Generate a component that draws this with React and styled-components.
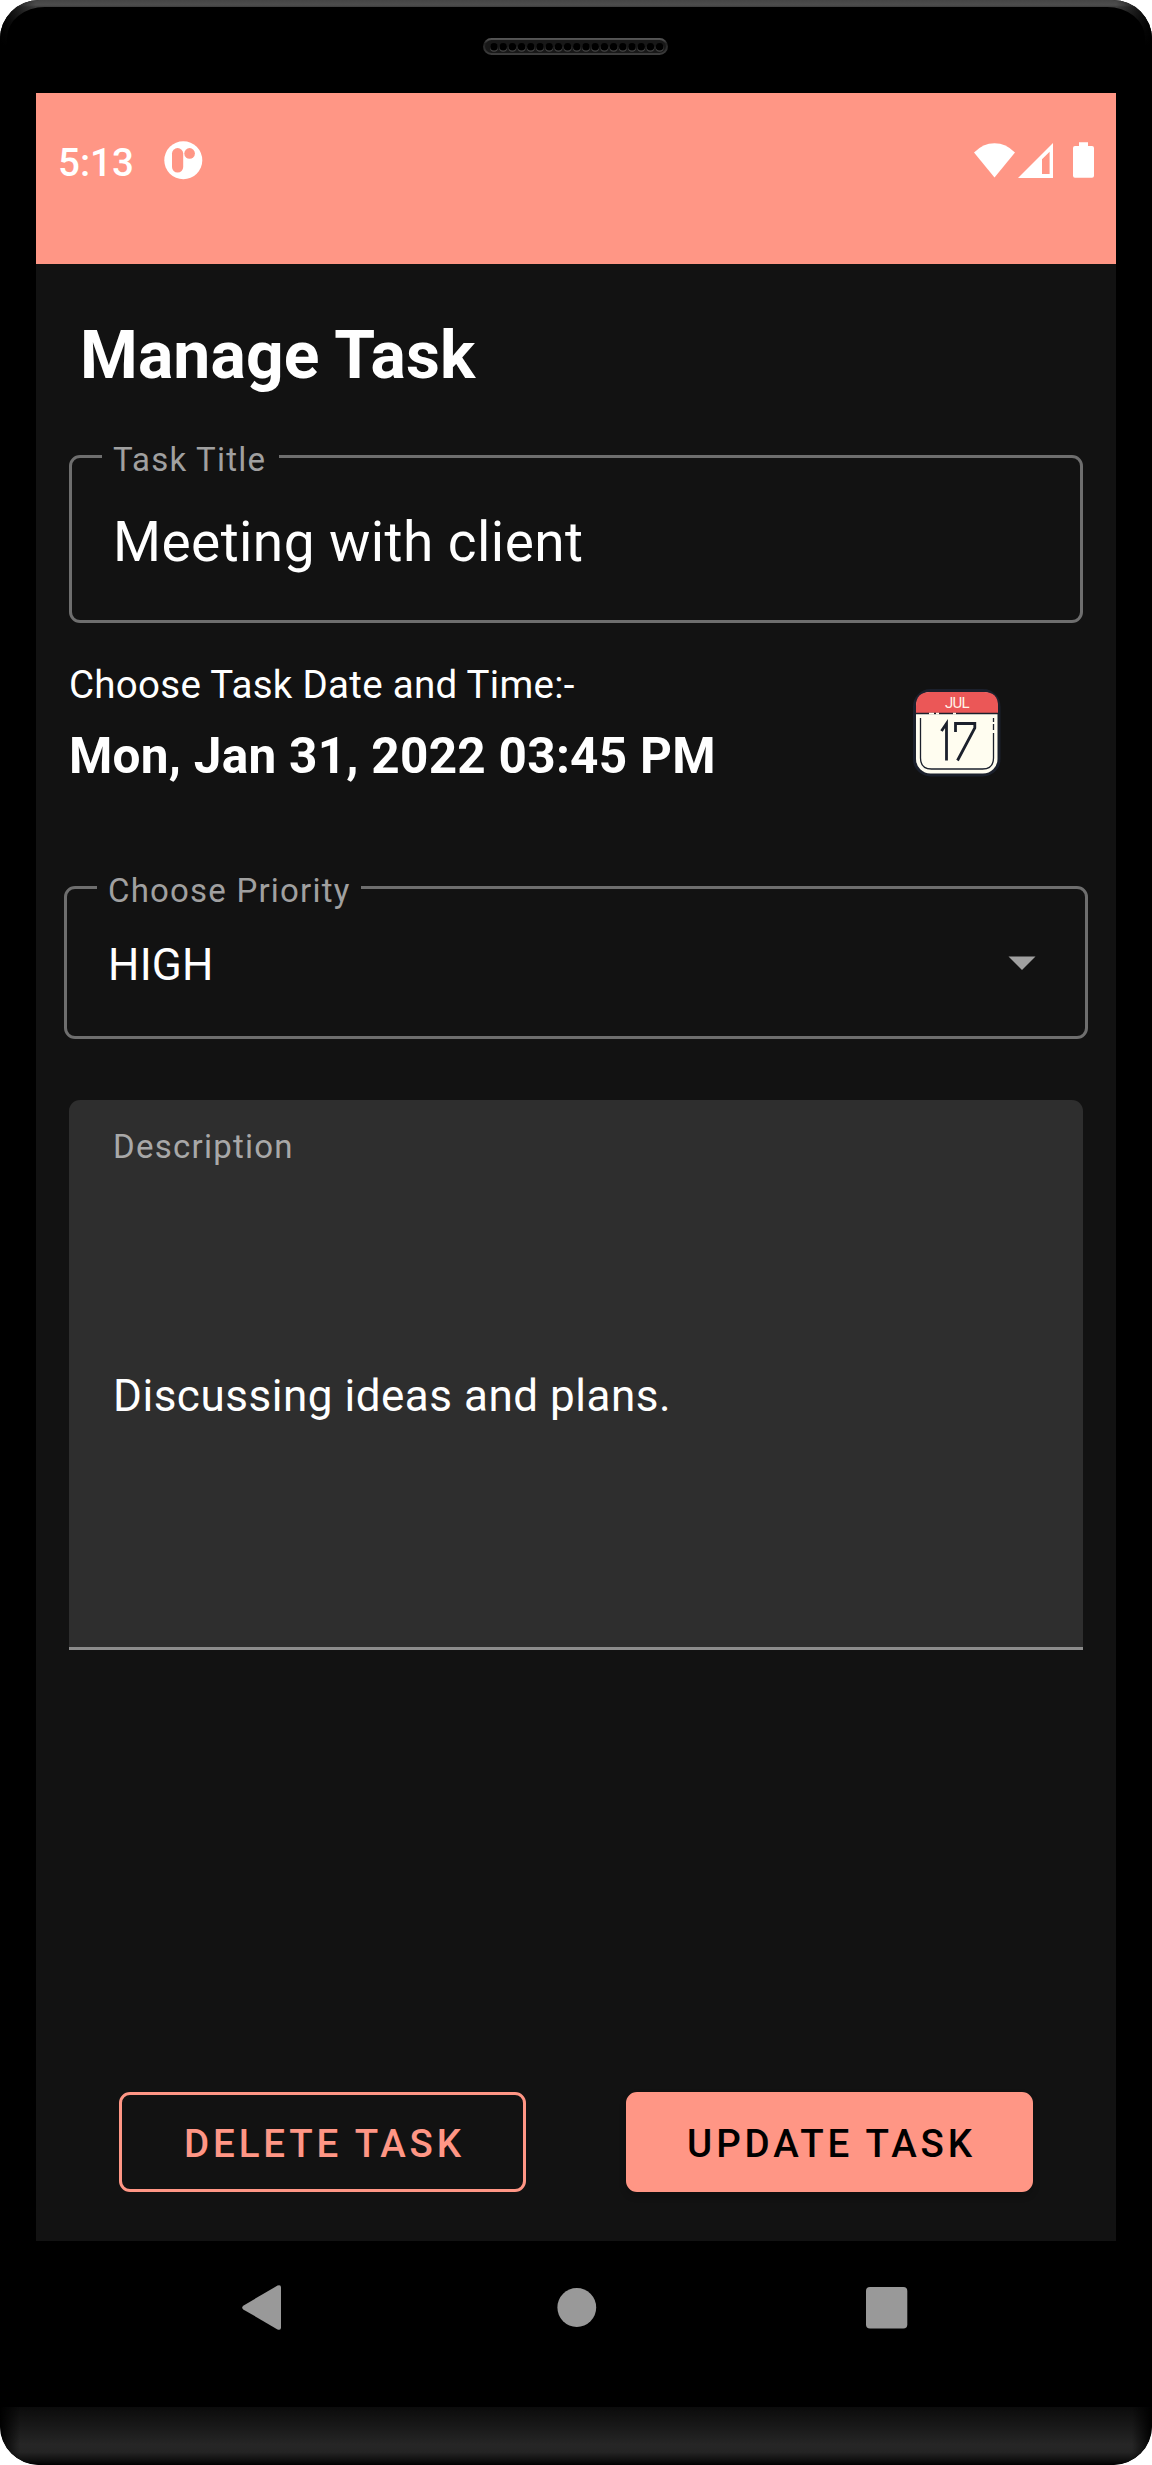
import React from "react";
import styled, { createGlobalStyle } from "styled-components";

const coral = "#ff9685";
const surface = "#121212";

const GlobalStyle = createGlobalStyle`
  *, *::before, *::after { box-sizing: border-box; }
  body { margin: 0; background: #fff; font-family: Roboto, "Liberation Sans", sans-serif; }
`;

const Phone = styled.div`
  width: 1152px;
  height: 2465px;
  display: flex;
  flex-direction: column;
  background: #000;
  border-radius: 39px;
  overflow: hidden;
`;

const TopBezel = styled.div`
  height: 93px;
  flex: none;
  background: linear-gradient(#454545, #4d4d4d 5px, #3c3c3c 7px, #000 46px);
`;

const TopBezelInner = styled.div`
  height: 93px;
  border-top: 7px solid transparent;
  border-radius: 38px 38px 0 0;
  background: #000 padding-box;
  display: flex;
  justify-content: center;
  padding: 31px 1px 0 0;
  margin: 0 7px;
`;

const BezelFrame = styled.div`
  height: 93px;
  background: linear-gradient(90deg, #000, transparent 36px, transparent 1116px, #000);
`;

const Screen = styled.main`
  height: 2148px;
  flex: none;
  margin: 0 36px;
  display: flex;
  flex-direction: column;
  background: ${surface};
  color: #fff;
`;

const StatusBar = styled.header`
  height: 171px;
  flex: none;
  display: flex;
  align-items: flex-start;
  padding: 43px 22px 0 22px;
  background: ${coral};
`;

const Clock = styled.span`
  width: 99px;
  font-size: 38.5px;
  font-weight: 500;
  line-height: 54px;
  white-space: nowrap;
`;

const AppBadge = styled.svg`
  width: 48px;
  height: 44px;
  margin-top: 2px;
`;

const StatusIcons = styled.svg`
  width: 132px;
  height: 44px;
  margin: 2px 0 0 auto;
`;

const Title = styled.h1`
  margin: 52px 0 59px 44px;
  font-size: 66px;
  line-height: 80px;
  font-weight: 700;
  letter-spacing: 0.12px;
`;

const Outlined = styled.div`
  position: relative;
  flex: none;
  height: ${(p) => p.$height}px;
  margin: 0 ${(p) => p.$inset}px;
  padding: ${(p) => p.$top}px 41px 0;
  border: 3px solid #6e6e6e;
  border-radius: 11px;
  display: flex;
  justify-content: space-between;
  align-items: flex-start;
`;

const FloatingLabel = styled.label`
  position: absolute;
  top: -18px;
  left: 30px;
  width: ${(p) => p.$width}px;
  padding-left: 11px;
  background: ${surface};
  color: #a0a0a0;
  font-size: 33px;
  line-height: 40px;
  letter-spacing: 1.2px;
  white-space: nowrap;
`;

const Value = styled.span`
  font-size: ${(p) => p.$size}px;
  line-height: ${(p) => p.$line}px;
  letter-spacing: ${(p) => p.$tracking}px;
  white-space: nowrap;
`;

const DropdownArrow = styled.svg`
  width: 28px;
  height: 14px;
  margin: 17px 8px 0 0;
`;

const DateRow = styled.section`
  display: flex;
  justify-content: space-between;
  align-items: flex-start;
  height: 124px;
  flex: none;
  margin: 39px 115px 100px 33px;
`;

const DateText = styled.div`
  display: flex;
  flex-direction: column;
  gap: 18px;
  white-space: nowrap;
`;

const DatePrompt = styled.span`
  font-size: 38.5px;
  line-height: 46px;
  letter-spacing: 0.29px;
`;

const DateValue = styled.strong`
  font-size: 49.5px;
  line-height: 60px;
  font-weight: 700;
  letter-spacing: 0.26px;
`;

const Calendar = styled.svg`
  width: 88px;
  height: 88px;
  margin-top: 27px;
`;

const Description = styled.div`
  flex: none;
  height: 550px;
  margin: 61px 33px 0;
  padding: 27px 44px 0;
  border-radius: 11px 11px 0 0;
  border-bottom: 3px solid #8c8c8c;
  background: #2e2e2e;
  display: flex;
  flex-direction: column;
  gap: 203px;
`;

const DescriptionLabel = styled.label`
  color: #a8a8a8;
  font-size: 33px;
  line-height: 40px;
  letter-spacing: 1.25px;
`;

const Actions = styled.footer`
  display: flex;
  justify-content: space-between;
  margin: auto 83px 49px;
`;

const Button = styled.button`
  width: 407px;
  height: 100px;
  padding: 4px 0 0 4px;
  border: 3px solid ${coral};
  border-radius: 11px;
  background: ${(p) => (p.$filled ? coral : "transparent")};
  color: ${(p) => (p.$filled ? "#000" : coral)};
  box-shadow: ${(p) => (p.$filled ? "0 4px 7px rgba(0, 0, 0, 0.2)" : "none")};
  font-family: inherit;
  font-size: 38.5px;
  font-weight: 500;
  line-height: 46px;
  letter-spacing: 3.85px;
`;

const NavBar = styled.nav`
  height: 166px;
  flex: none;
  display: flex;
  justify-content: space-between;
  align-items: flex-start;
  padding: 44px 243px 0 240px;
`;

const NavIcon = styled.svg`
  width: 44px;
  height: 46px;
  fill: #999;
`;

const BottomBezel = styled.div`
  height: 58px;
  flex: none;
  border-radius: 0 0 39px 39px;
  background:
    linear-gradient(90deg, #000, transparent 20px, transparent 1132px, #000),
    linear-gradient(#0b0b0b, #171717 30%, #262626 65%, #242424 78%, #0c0c0c 94%, #000 100%);
`;

function Speaker() {
  const holes = Array.from({ length: 19 }, (_, i) => 11 + i * 9.2);
  return (
    <svg width="185" height="17" viewBox="0 0 185 17">
      <defs>
        <linearGradient id="grille" x1="0" y1="0" x2="0" y2="1">
          <stop offset="0" stopColor="#555" />
          <stop offset="0.3" stopColor="#222" />
          <stop offset="1" stopColor="#3c3c3c" />
        </linearGradient>
      </defs>
      <rect x="1" y="1" width="183" height="15" rx="7.5" fill="#181818" stroke="url(#grille)" strokeWidth="2" />
      {holes.map((x) => (
        <g key={x}>
          <circle cx={x} cy="9.8" r="4" fill="#454545" />
          <circle cx={x} cy="8.8" r="3.8" fill="#000" />
        </g>
      ))}
    </svg>
  );
}

export default function App() {
  return (
    <>
      <GlobalStyle />
      <Phone>
        <TopBezel>
          <BezelFrame>
            <TopBezelInner>
              <Speaker />
            </TopBezelInner>
          </BezelFrame>
        </TopBezel>

        <Screen>
          <StatusBar>
            <Clock>5:13</Clock>
            <AppBadge viewBox="157 138 48 44">
              <circle cx="183.3" cy="160.3" r="19" fill="#fff" />
              <rect x="172" y="148" width="11.2" height="24.6" rx="5.6" fill={coral} />
              <circle cx="189.6" cy="153.4" r="5.3" fill={coral} />
            </AppBadge>
            <StatusIcons viewBox="962 138 132 44" fill="#fff">
              <path d="M974 152.5 Q983 143.2 994.5 143.2 Q1006 143.2 1015 152.5 L994.5 177.5 Z" />
              <path fillRule="evenodd" d="M1018 178 L1053 143 V178 Z M1042 159.3 V174 H1049.6 V151.7 Z" />
              <path d="M1079 142.3 H1088 V146 H1092 Q1094 146 1094 148 V175.8 Q1094 177.8 1092 177.8 H1075 Q1073 177.8 1073 175.8 V148 Q1073 146 1075 146 H1079 Z" />
            </StatusIcons>
          </StatusBar>

          <Title>Manage Task</Title>

          <Outlined $height={168} $inset={33} $top={52}>
            <FloatingLabel $width={177}>Task Title</FloatingLabel>
            <Value $size={55} $line={64} $tracking={0.43}>Meeting with client</Value>
          </Outlined>

          <DateRow>
            <DateText>
              <DatePrompt>Choose Task Date and Time:-</DatePrompt>
              <DateValue>Mon, Jan 31, 2022 03:45 PM</DateValue>
            </DateText>
            <Calendar viewBox="913 689 88 88">
              <rect x="914.5" y="690.5" width="84.5" height="84.5" rx="16" fill="#fffdf0" stroke="#1b202c" strokeWidth="3" />
              <path d="M916 713 V706 Q916 692 930 692 H984 Q998 692 998 706 V713 Z" fill="#eb5757" />
              <path d="M916 713.5 H998" stroke="#1b202c" strokeWidth="1.5" />
              <path d="M929 713.7 H934 M936 713.7 H939 M953 713.7 H956" stroke="#fffdf0" strokeWidth="1.8" />
              <text x="945" y="708" fontFamily="Roboto" fontSize="15" fontWeight="400" textLength="24.5" fill="#fff3e8">JUL</text>
              <path d="M920.5 718 V758 Q920.5 769 931.5 769 H982.5 Q993.5 769 993.5 758 V733 M993.5 718 V722 M993.5 724 V730" fill="none" stroke="#1b202c" strokeWidth="1.3" />
              <path d="M941.5 731 L946.5 723.5 V760.5 M955.5 732 V723.5 H974.8 V728 L957.5 760.5" fill="none" stroke="#1b202c" strokeWidth="2.8" />
            </Calendar>
          </DateRow>

          <Outlined $height={153} $inset={28} $top={50}>
            <FloatingLabel $width={264}>Choose Priority</FloatingLabel>
            <Value $size={44} $line={52} $tracking={0.25}>HIGH</Value>
            <DropdownArrow viewBox="0 0 28 14">
              <path d="M0.5 0.5 H27.5 L14 14 Z" fill="#a0a0a0" />
            </DropdownArrow>
          </Outlined>

          <Description>
            <DescriptionLabel>Description</DescriptionLabel>
            <Value $size={44} $line={52} $tracking={0.53}>Discussing ideas and plans.</Value>
          </Description>

          <Actions>
            <Button>DELETE TASK</Button>
            <Button $filled>UPDATE TASK</Button>
          </Actions>
        </Screen>

        <NavBar>
          <NavIcon viewBox="240 2285 44 46">
            <path d="M243.2 2305.7 L277.5 2285.6 Q281 2284.3 281 2287.5 V2327.5 Q281 2330.8 277.5 2329.4 L243.2 2309.4 Q241.2 2307.5 243.2 2305.7 Z" />
          </NavIcon>
          <NavIcon viewBox="552.7 2285 44 46">
            <circle cx="576.5" cy="2307.5" r="19.4" />
          </NavIcon>
          <NavIcon viewBox="865 2285 44 46">
            <rect x="866" y="2287" width="41.3" height="41.4" rx="4" />
          </NavIcon>
        </NavBar>
        <BottomBezel />
      </Phone>
    </>
  );
}
